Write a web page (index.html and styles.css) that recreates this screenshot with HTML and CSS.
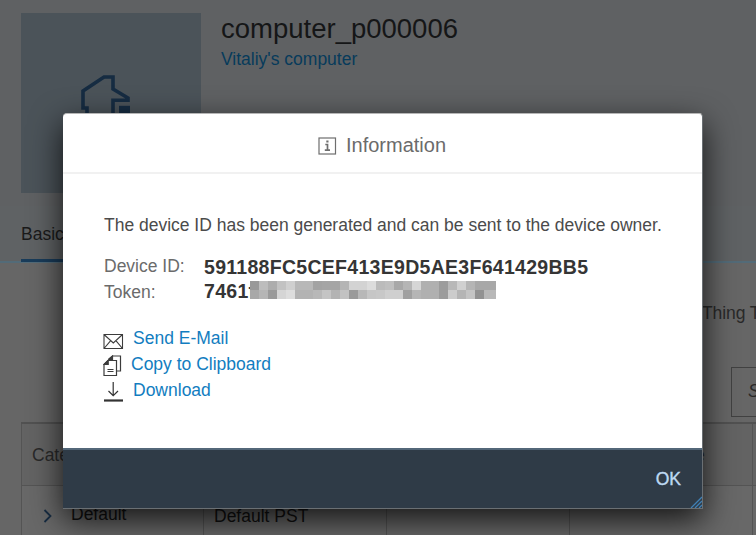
FILE: index.html
```html
<!DOCTYPE html>
<html lang="en">
<head>
<meta charset="utf-8">
<title>computer_p000006</title>
<link rel="stylesheet" href="styles.css">
</head>
<body>
<main class="page">
  <header class="object-header">
    <div class="object-image">
      <svg class="house" width="50" height="60" viewBox="0 0 50 60" fill="none" stroke="#162c42" stroke-width="3.6">
        <path d="M6 50V33H2V16L23 2H32V14L47 23V25.200H32V50"/>
        <path d="M38 30.800H49V50H38z" fill="#162c42" stroke="none"/>
      </svg>
    </div>
    <div class="object-titles">
      <h1>computer_p000006</h1>
      <a class="subtitle">Vitaliy's computer</a>
    </div>
  </header>
  <nav class="tabs"><span class="tab">Basic</span></nav>
  <section class="content">
    <div class="thing">Thing T</div>
    <div class="search">S</div>
    <div class="grid">
      <div class="cell head"><span>Category</span></div><div class="cell head"></div><div class="cell head"></div><div class="cell head last-head">e</div><div class="cell head"></div>
      <div class="cell row first"><svg width="10" height="16" viewBox="0 0 10 16" fill="none" stroke="#182d43" stroke-width="1.8"><path d="M1.500 2L7.500 8L1.500 14"/></svg><span>Default</span></div><div class="cell row second">Default PST</div><div class="cell row"></div><div class="cell row"></div><div class="cell row"></div>
    </div>
  </section>
</main>
<div class="dialog" role="dialog">
  <div class="dialog-header">
    <svg width="19" height="18" viewBox="0 0 19 18" fill="none" stroke="#6e6e6e" stroke-width="1.200"><rect x="1" y="1" width="16.500" height="16"/><path d="M7.300 7.500H9.500V13M6.800 13.200H12" stroke-width="1.700"/><path d="M8.300 4.500H10.500" stroke-width="2"/></svg>
    <span>Information</span>
  </div>
  <div class="dialog-body">
    <p class="message">The device ID has been generated and can be sent to the device owner.</p>
    <div class="field"><span class="label">Device ID:</span><b>591188FC5CEF413E9D5AE3F641429BB5</b></div>
    <div class="field token"><span class="label">Token:</span><b>7461f</b>
      <svg class="mosaic" width="246" height="18" viewBox="0 0 246 18" shape-rendering="crispEdges"></svg>
    </div>
    <div class="actions">
      <a class="action"><svg width="21" height="20" viewBox="0 0 21 20" fill="none" stroke="#3c3c3c" stroke-width="1.100"><path d="M1 3.500H19.500V17.500H1zM1 3.500L10.300 12L19.500 3.500M1 17.500L7.700 9.700M19.500 17.500L12.900 9.700"/></svg><span>Send E-Mail</span></a>
      <a class="action copy"><svg width="21" height="22" viewBox="0 0 21 22" fill="none" stroke="#3c3c3c" stroke-width="1.200"><path d="M5 5.500H13.500V20.500H1V9.500zM1 9.500H5V5.500M6 5V4L9.500 1H17.500V16H14"/><path d="M1 9.500L5 5.500V9.500zM6 5V4L9.500 1V5z" fill="#3c3c3c"/><path d="M4.500 14.500H10.500M4.500 16.500H10.500"/></svg><span>Copy to Clipboard</span></a>
      <a class="action"><svg width="21" height="22" viewBox="0 0 21 22" fill="none" stroke="#333" stroke-width="1.200"><path d="M10.200 1V14.500M5.500 10L10.200 14.700L15 10"/><path d="M1 19.500H20" stroke-width="2.200"/></svg><span>Download</span></a>
    </div>
  </div>
  <div class="dialog-footer"><button>OK</button>
    <svg class="resize" width="12" height="12" viewBox="0 0 12 12" stroke="#3f80b5" stroke-width="1.300"><path d="M1 12L12 1M5 12L12 5M9 12L12 9"/></svg>
  </div>
</div>
<script src="mosaic.js"></script>
</body>
</html>
```
FILE: styles.css
```css
* { box-sizing: border-box; }
body { margin: 0; width: 756px; height: 535px; overflow: hidden; background: #666; color: #1a1a1a; font-family: "Liberation Sans", Arial, sans-serif; font-size: 17.5px; }
.page { height: 535px; overflow: hidden; }
.object-header { display: flex; gap: 20px; height: 206px; padding: 13px 21px 0; background: #5f6163; }
.object-image { width: 180px; height: 180px; background: #4b5359; }
.house { display: block; margin: 62px 0 0 60px; }
h1 { margin: 0; font-size: 27.5px; line-height: 32px; font-weight: 400; color: #151617; }
.subtitle { display: block; margin-top: 3px; line-height: 22px; color: #073b5b; }
.tabs { height: 57px; padding-left: 21px; background: #5f6264; border-bottom: 2px solid #536b78; }
.tab { display: block; width: 60px; height: 56px; padding-top: 18px; line-height: 21px; border-bottom: 3px solid #193c5a; }
.content { height: 272px; background: #666; }
.thing { height: 104px; padding: 40px 0 0 702px; line-height: 21px; white-space: nowrap; letter-spacing: -.1px; color: #292929; }
.search { width: 60px; height: 50px; margin-left: 731px; padding: 13px 0 0 16px; line-height: 21px; font-style: italic; border: 1px solid #414141; color: #292929; }
.grid { display: grid; grid-template-columns: 182px 183px 183px 183px 60px; margin: 5px 0 0 21px; border-top: 2px solid #515151; }
.cell { height: 62px; border-left: 1px solid #545454; border-bottom: 1px solid #545454; padding: 21px 0 0 10px; line-height: 21px; color: #292929; background: #636363; }
.row { color: #111; background: #686868; padding-top: 20px; }
.first { display: flex; gap: 18px; padding: 18px 0 0 21px; }
.first svg { margin-top: 4px; }
.last-head { padding-left: 125px; }
.dialog { position: absolute; left: 63px; top: 113px; width: 640px; height: 396px; display: flex; flex-direction: column; border: 1px solid #6a6f73; border-top-color: #b6b6b6; border-left: 0; border-radius: 4px 4px 0 0; background: #fff; box-shadow: 0 11px 32px rgba(0,0,0,.8); overflow: hidden; }
.dialog-header { height: 60px; display: flex; align-items: center; justify-content: center; gap: 9px; padding: 5px 1px 0 0; border-bottom: 2px solid #f1f1f1; font-size: 20px; color: #6b6b6b; }
.dialog-body { flex: 1; padding: 40px 40px 0 41px; }
.message { margin: 0; line-height: 22px; white-space: nowrap; letter-spacing: -.01px; color: #4b4b4b; }
.field { display: flex; height: 26px; line-height: 22px; color: #6b6b6b; }
.message + .field { margin-top: 19px; }
.label { width: 100px; flex: none; }
.field b { font-size: 19.5px; letter-spacing: .29px; color: #353535; line-height: 24px; }
.token b { line-height: 20px; }
.mosaic { display: block; position: relative; flex: none; margin: 0 0 0 -5px; }
.actions { margin-top: 20px; }
.action { display: flex; gap: 9px; height: 26px; line-height: 22px; color: #127dc0; }
.action svg { flex: none; margin: 4px 0 0 -1px; }
.action:last-child svg { margin-top: 2px; }
.copy { gap: 7px; }
.copy svg { margin-top: 2px; }
.dialog-footer { position: relative; height: 60px; flex: none; border-top: 2px solid #536779; background: #2f3b47; display: flex; justify-content: flex-end; align-items: center; padding: 0 21px 0 0; }
button { padding: 0; background: none; border: 0; font: 17.5px "Liberation Sans", Arial, sans-serif; color: #bdd9f2; -webkit-text-stroke: .4px #bdd9f2; }
.resize { position: absolute; right: 0; bottom: 0; }
```
FILE: mosaic.js
```js
const rows = [
  "99 bd ad c2 cf b8 b8 a3 a5 a5 b5 d3 d3 dc bb bf a8 b5 d6 b0 b0 9c b8 d0 b5 a8 a8",
  "a8 b5 9a d5 dd b3 b3 b8 c4 b3 c2 9a b8 c6 c8 cf cf a0 b5 b0 b0 9c cc b5 c4 92 b8"
];
const mosaic = document.querySelector(".mosaic");
rows.forEach((row, y) => row.split(" ").forEach((tone, x) => {
  const tile = document.createElementNS("http://www.w3.org/2000/svg", "rect");
  tile.setAttribute("x", x * 9);
  tile.setAttribute("y", y * 9);
  tile.setAttribute("width", x === 26 ? 12 : 9);
  tile.setAttribute("height", 9);
  tile.setAttribute("fill", "#" + tone.repeat(3));
  mosaic.append(tile);
}));
```
